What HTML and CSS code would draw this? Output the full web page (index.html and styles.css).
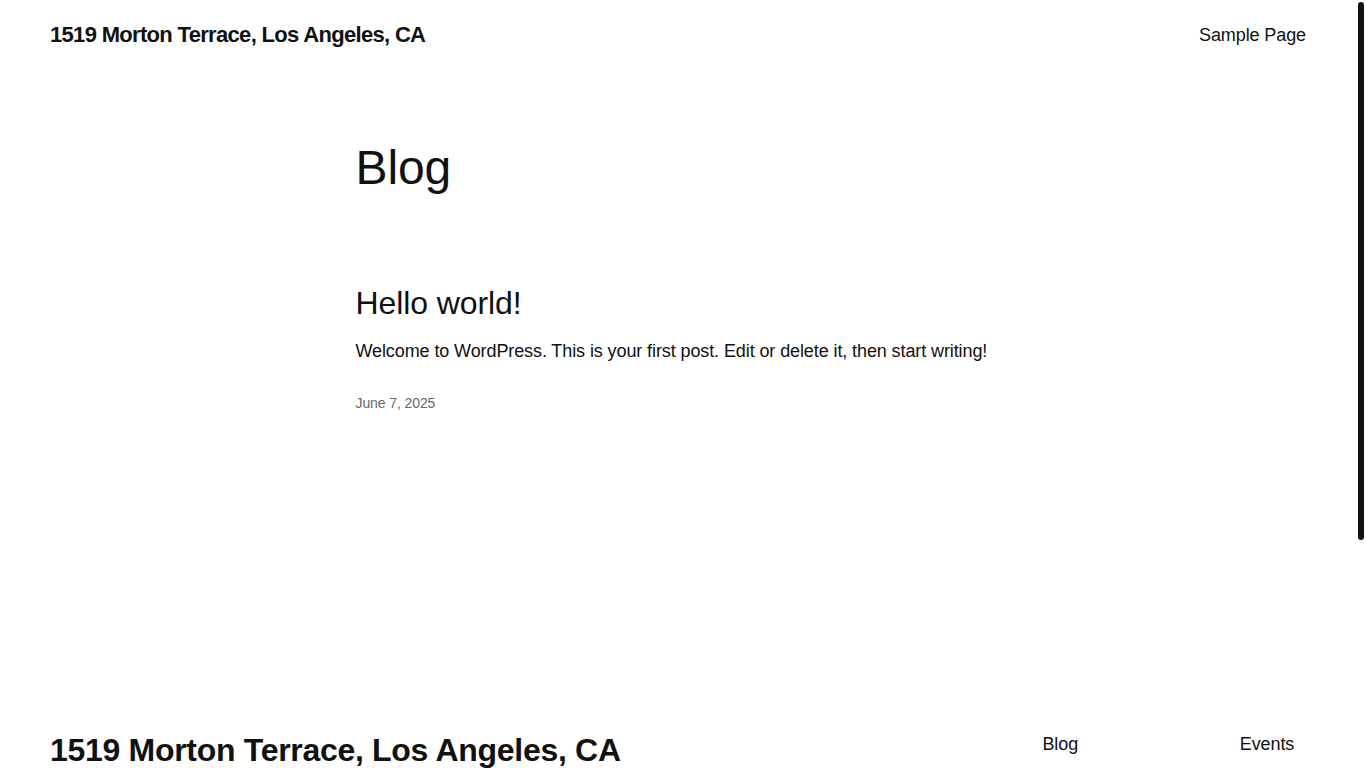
FILE: index.html
```html
<!DOCTYPE html>
<html lang="en">
<head>
<meta charset="utf-8">
<title>Blog – 1519 Morton Terrace, Los Angeles, CA</title>
<link rel="stylesheet" href="styles.css">
</head>
<body>
<div class="page">
  <header class="site-header">
    <a class="site-title" href="#">1519 Morton Terrace, Los Angeles, CA</a>
    <nav class="header-nav"><a href="#">Sample Page</a></nav>
  </header>
  <main class="site-main">
    <div class="content">
      <h1 class="page-title">Blog</h1>
      <article class="post">
        <h2 class="post-title"><a href="#">Hello world!</a></h2>
        <p class="post-excerpt">Welcome to WordPress. This is your first post. Edit or delete it, then start writing!</p>
        <div class="post-date">June 7, 2025</div>
      </article>
    </div>
  </main>
  <footer class="site-footer">
    <div class="footer-top">
      <a class="footer-title" href="#">1519 Morton Terrace, Los Angeles, CA</a>
      <div class="footer-navs">
        <nav class="footer-col">
          <a href="#">Blog</a>
          <a href="#">About</a>
          <a href="#">FAQs</a>
          <a href="#">Authors</a>
        </nav>
        <nav class="footer-col">
          <a href="#">Events</a>
          <a href="#">Shop</a>
          <a href="#">Patterns</a>
          <a href="#">Themes</a>
        </nav>
      </div>
    </div>
    <div class="footer-bottom">
      <span>Twenty Twenty-Five</span>
      <span>Designed with <a href="#">WordPress</a></span>
    </div>
  </footer>
</div>
<div class="scrollbar" aria-hidden="true"><div class="scroll-thumb"></div></div>
</body>
</html>
```

FILE: styles.css
```css
html {
  background: #ffffff;
}
body {
  margin: 0;
  font-family: "Liberation Sans", Arial, sans-serif;
  color: #111111;
  background: #ffffff;
  letter-spacing: -0.1px;
}
a {
  color: inherit;
  text-decoration: none;
}
.page {
  margin-right: 10px;
}
.scrollbar {
  position: fixed;
  top: 0;
  right: 0;
  width: 10px;
  height: 100vh;
  background: #ffffff;
}
.scroll-thumb {
  margin: 2px;
  height: 538px;
  background: #111111;
  border-radius: 3px;
}
.site-header {
  display: flex;
  justify-content: space-between;
  align-items: center;
  padding: 21px 50px 0;
}
.site-title {
  font-size: 22px;
  line-height: 28.6px;
  font-weight: 700;
  letter-spacing: -0.68px;
}
.header-nav {
  font-size: 18px;
  line-height: 27px;
}
.site-main {
  padding: 91px 50px 0;
}
.content {
  width: 645px;
  margin: 0 auto;
}
.page-title {
  margin: 0;
  font-size: 48px;
  line-height: 54px;
  font-weight: 400;
}
.post {
  margin-top: 90px;
}
.post-title {
  margin: 0;
  font-size: 32px;
  line-height: 36px;
  font-weight: 400;
}
.post-excerpt {
  margin: 17px 0 0;
  font-size: 18px;
  line-height: 27px;
}
.post-date {
  margin-top: 28px;
  font-size: 14px;
  line-height: 21px;
  color: #686868;
}
.site-footer {
  padding: 317px 50px 60px;
}
.footer-top {
  display: flex;
  justify-content: space-between;
  align-items: flex-start;
}
.footer-title {
  font-size: 32px;
  line-height: 38.4px;
  font-weight: 700;
  letter-spacing: -0.3px;
}
.footer-navs {
  display: flex;
  gap: 136px;
  font-size: 18px;
  line-height: 27px;
}
.footer-col {
  display: flex;
  flex-direction: column;
  gap: 8px;
}
.footer-bottom {
  display: flex;
  justify-content: space-between;
  margin-top: 90px;
  font-size: 14px;
  line-height: 21px;
}
```
